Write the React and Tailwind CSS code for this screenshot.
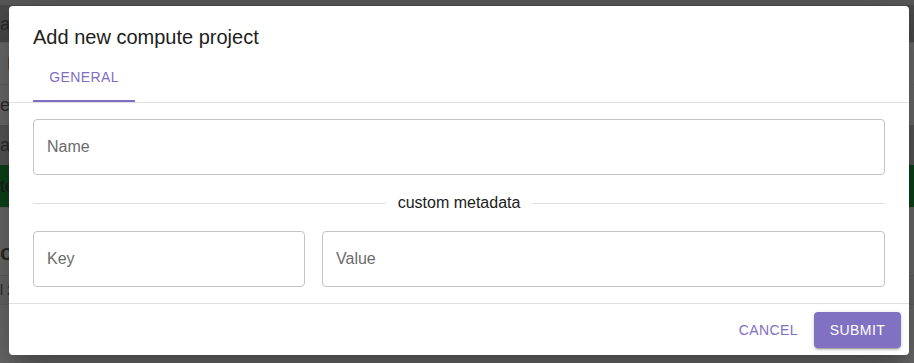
import React from "react";

const font = { fontFamily: '"Liberation Sans", Arial, sans-serif' };

const Field = ({ label, className = "" }) => (
  <div className={`h-14 rounded border border-[#c4c4c4] flex items-center px-[13px] ${className}`}>
    <span className="text-base text-[#6b6b6b]">{label}</span>
  </div>
);

const Backdrop = () => (
  <div className="flex flex-col h-[363px] overflow-hidden bg-[#6a6a6a] text-[#2a2a2a] text-lg">
    <div className="h-[5px] bg-[#585858]" />
    <div className="h-[37px] bg-[#4a4a4a] flex items-center">ac</div>
    <div className="h-[42px] bg-[#6b6b6b] border-t border-[#626262] flex items-center pl-[7px]">F</div>
    <div className="h-[41px] bg-[#6b6b6b] border-t border-[#626262] flex items-center">e</div>
    <div className="h-[40px] bg-[#575757] flex items-center">ac</div>
    <div className="h-[42px] bg-[#0c4419] flex items-center text-[#1d1d1d]">te</div>
    <div className="h-[25px] bg-[#6a6a6a] border-t border-[#626262]" />
    <div className="h-[43px] bg-[#6a6a6a] flex items-center text-[22px] font-bold">ou</div>
    <div className="h-[30px] bg-[#666666] border-y border-[#5e5e5e] flex items-center text-sm">l 2</div>
    <div className="flex-1 bg-[#6a6a6a]" />
  </div>
);

export default function App() {
  return (
    <div className="relative w-[914px] h-[363px] overflow-hidden" style={font}>
      <Backdrop />

      {/* dialog */}
      <div className="absolute left-[9px] top-[6px] w-[900px] h-[349px] bg-white rounded flex flex-col shadow-[0_11px_15px_-7px_rgba(0,0,0,0.2),0_24px_38px_3px_rgba(0,0,0,0.14),0_9px_46px_8px_rgba(0,0,0,0.12)]">
        <h2 className="px-6 pt-[15px] h-[48px] text-xl leading-8 text-[#212121]">Add new compute project</h2>

        <div className="px-6 flex">
          <div className="w-[102px] h-[48px] flex items-center justify-center border-b-2 border-[#7f6ec3] text-sm uppercase tracking-[0.4px] text-[#7f6ec3]">
            General
          </div>
        </div>

        <div className="border-y border-[#e0e0e0] px-6 py-4 flex flex-col">
          <Field label="Name" />

          <div className="flex items-center h-6 my-4">
            <div className="flex-1 border-t border-[#e0e0e0]" />
            <span className="px-3 text-base text-[#212121]">custom metadata</span>
            <div className="flex-1 border-t border-[#e0e0e0]" />
          </div>

          <div className="flex gap-[17px]">
            <Field label="Key" className="w-[272px]" />
            <Field label="Value" className="flex-1" />
          </div>
        </div>

        <div className="flex-1 flex items-center justify-end gap-2 px-2">
          <button className="h-9 px-2 text-sm uppercase tracking-[0.4px] text-[#7f6ec3] rounded">Cancel</button>
          <button className="h-9 w-[87px] text-sm uppercase tracking-[0.4px] text-white bg-[#8171c2] rounded shadow-[0_3px_1px_-2px_rgba(0,0,0,0.2),0_2px_2px_0_rgba(0,0,0,0.14),0_1px_5px_0_rgba(0,0,0,0.12)]">
            Submit
          </button>
        </div>
      </div>
    </div>
  );
}
